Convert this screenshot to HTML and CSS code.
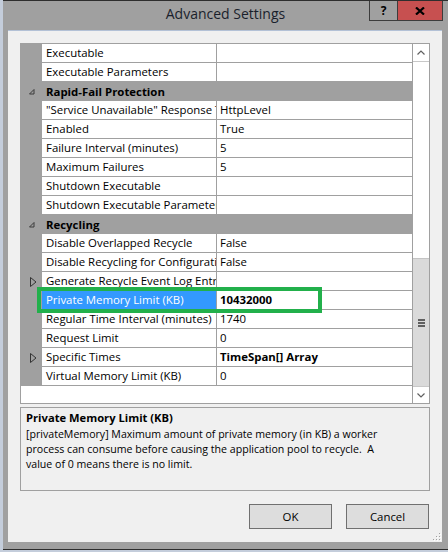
FILE: index.html
```html
<!DOCTYPE html>
<html>
<head>
<meta charset="utf-8">
<link rel="stylesheet" href="styles.css">
</head>
<body>
<div class="window">
  <div class="titlebar">
    <div class="title">Advanced Settings</div>
    <div class="caps">
      <div class="help">?</div>
      <div class="close">
        <svg width="10" height="8" viewBox="0 0 10 8"><path d="M1 0.5 L9 7.5 M9 0.5 L1 7.5" stroke="#000" stroke-width="2.2" fill="none"/></svg>
      </div>
    </div>
  </div>
  <div class="client">
    <div class="grid">
      <div class="rows">
        <div class="row"><div class="gut"></div><div class="name">Executable</div><div class="val"></div></div>
        <div class="row"><div class="gut"></div><div class="name">Executable Parameters</div><div class="val"></div></div>
        <div class="row cat"><div class="gut"><svg class="exp" width="6" height="6" viewBox="0 0 6 6"><path d="M5 0.5 L5 5 L0.5 5 Z" stroke="#3a3a3a" stroke-width="1" fill="none"/></svg></div><div class="name">Rapid-Fail Protection</div></div>
        <div class="row"><div class="gut"></div><div class="name">"Service Unavailable" Response Type</div><div class="val">HttpLevel</div></div>
        <div class="row"><div class="gut"></div><div class="name">Enabled</div><div class="val">True</div></div>
        <div class="row"><div class="gut"></div><div class="name">Failure Interval (minutes)</div><div class="val">5</div></div>
        <div class="row"><div class="gut"></div><div class="name">Maximum Failures</div><div class="val">5</div></div>
        <div class="row"><div class="gut"></div><div class="name">Shutdown Executable</div><div class="val"></div></div>
        <div class="row"><div class="gut"></div><div class="name">Shutdown Executable Parameters</div><div class="val"></div></div>
        <div class="row cat"><div class="gut"><svg class="exp" width="6" height="6" viewBox="0 0 6 6"><path d="M5 0.5 L5 5 L0.5 5 Z" stroke="#3a3a3a" stroke-width="1" fill="none"/></svg></div><div class="name">Recycling</div></div>
        <div class="row"><div class="gut"></div><div class="name">Disable Overlapped Recycle</div><div class="val">False</div></div>
        <div class="row"><div class="gut"></div><div class="name">Disable Recycling for Configuration Changes</div><div class="val">False</div></div>
        <div class="row"><div class="gut gc"><svg class="col" width="7" height="10" viewBox="0 0 7 10"><path d="M0.5 0.5 L6 5 L0.5 9.5 Z" stroke="#333" stroke-width="1" fill="none"/></svg></div><div class="name">Generate Recycle Event Log Entry</div><div class="val"></div></div>
        <div class="row selrow"><div class="gut"></div><div class="name sel">Private Memory Limit (KB)</div><div class="val b">10432000</div><div class="highlight"></div></div>
        <div class="row"><div class="gut"></div><div class="name">Regular Time Interval (minutes)</div><div class="val">1740</div></div>
        <div class="row"><div class="gut"></div><div class="name">Request Limit</div><div class="val">0</div></div>
        <div class="row"><div class="gut gc"><svg class="col" width="7" height="10" viewBox="0 0 7 10"><path d="M0.5 0.5 L6 5 L0.5 9.5 Z" stroke="#333" stroke-width="1" fill="none"/></svg></div><div class="name">Specific Times</div><div class="val b">TimeSpan[] Array</div></div>
        <div class="row"><div class="gut"></div><div class="name">Virtual Memory Limit (KB)</div><div class="val">0</div></div>
      </div>
      <div class="scroll">
        <div class="sbtn up"><svg width="8" height="5" viewBox="0 0 8 5"><path d="M0.5 4.5 L4 1 L7.5 4.5" stroke="#606060" stroke-width="1.2" fill="none"/></svg></div>
        <div class="track"></div>
        <div class="thumb"><div class="grip"><span></span><span></span><span></span></div></div>
        <div class="sbtn down"><svg width="8" height="5" viewBox="0 0 8 5"><path d="M0.5 0.5 L4 4 L7.5 0.5" stroke="#606060" stroke-width="1.2" fill="none"/></svg></div>
      </div>
    </div>
    <div class="desc">
      <div class="desc-title">Private Memory Limit (KB)</div>
      <div class="desc-text">[privateMemory] Maximum amount of private memory (in KB) a worker<br>process can consume before causing the application pool to recycle.&nbsp; A<br>value of 0 means there is no limit.</div>
    </div>
    <div class="buttons">
      <div class="btn">OK</div>
      <div class="btn">Cancel</div>
    </div>
    <svg class="sizegrip" width="9" height="8" viewBox="0 0 9 8">
      <rect x="7" y="0" width="1" height="1" fill="#a0a0a0"/>
      <rect x="4" y="3" width="1" height="1" fill="#a0a0a0"/>
      <rect x="7" y="3" width="1" height="1" fill="#a0a0a0"/>
      <rect x="1" y="6" width="1" height="1" fill="#a0a0a0"/>
      <rect x="4" y="6" width="1" height="1" fill="#a0a0a0"/>
      <rect x="7" y="6" width="1" height="1" fill="#a0a0a0"/>
      <rect x="8" y="1" width="1" height="1" fill="#fff"/>
      <rect x="5" y="4" width="1" height="1" fill="#fff"/>
      <rect x="8" y="4" width="1" height="1" fill="#fff"/>
      <rect x="2" y="7" width="1" height="1" fill="#fff"/>
      <rect x="5" y="7" width="1" height="1" fill="#fff"/>
      <rect x="8" y="7" width="1" height="1" fill="#fff"/>
    </svg>
  </div>
</div>
</body>
</html>
```

FILE: styles.css
```css
* { box-sizing: border-box; }
html, body { margin: 0; padding: 0; }
body {
  width: 448px;
  height: 552px;
  overflow: hidden;
  background: #c4cddb;
  font-family: "Open Sans", "Noto Sans", sans-serif;
  color: #000;
}
.window {
  margin-left: 3px;
  width: 445px;
  height: 550px;
  background: #a0a0a0;
  border-top: 1px solid #2e2e2e;
  border-bottom: 1px solid #2e2e2e;
  display: flex;
  flex-direction: column;
}
.titlebar {
  height: 29px;
  flex: none;
  display: grid;
  grid-template-columns: 1fr auto 1fr;
}
.title {
  grid-column: 2;
  padding-top: 4px;
  font-size: 14px;
  line-height: 18px;
  color: #1a1f2c;
  white-space: nowrap;
}
.caps {
  grid-column: 3;
  justify-self: end;
  display: flex;
  height: 20px;
  margin-right: 5px;
}
.help {
  width: 28px;
  height: 20px;
  border-left: 1px solid #3c3c3c;
  border-bottom: 1px solid #3c3c3c;
  display: flex;
  align-items: center;
  justify-content: center;
  font-weight: bold;
  font-size: 12px;
  color: #000;
  padding-bottom: 1px;
}
.close {
  width: 46px;
  height: 20px;
  background: #c75050;
  border: 1px solid #3c3c3c;
  border-top: none;
  display: flex;
  align-items: center;
  justify-content: center;
}
.client {
  position: relative;
  flex: none;
  margin: 0 6px 0 5px;
  height: 512px;
  background: #f0f0f0;
  border-top: 1px solid #b3c1d6;
  padding: 12px 12px 0 12px;
  display: flex;
  flex-direction: column;
}
.grid {
  flex: none;
  height: 361px;
  border: 1px solid #a0a0a0;
  background: #fff;
  display: flex;
}
.rows {
  width: 391px;
  font-size: 11.4px;
}
.row {
  display: flex;
  height: 19px;
}
.gut {
  width: 21px;
  flex: none;
  background: #a0a0a0;
  display: flex;
  align-items: center;
  padding-left: 8px;
}
.gut.gc { padding-left: 9px; }
.name {
  width: 175px;
  flex: none;
  padding-left: 4px;
  border-right: 1px solid #a0a0a0;
  border-bottom: 1px solid #a0a0a0;
  line-height: 18px;
  white-space: nowrap;
  overflow: hidden;
}
.val {
  width: 195px;
  flex: none;
  padding-left: 3px;
  border-bottom: 1px solid #a0a0a0;
  line-height: 18px;
  white-space: nowrap;
  overflow: hidden;
}
.b { font-weight: bold; }
.cat { background: #a0a0a0; }
.cat .name {
  width: auto;
  flex: 1;
  border: none;
  font-weight: bold;
  line-height: 19px;
}
.sel {
  background: #3399ff;
  color: #fff;
}
.selrow { position: relative; }
.highlight {
  position: absolute;
  left: 16px;
  top: -4px;
  width: 285px;
  height: 26px;
  border: 4px solid #22b04b;
}
.scroll {
  width: 17px;
  flex: none;
  border-left: 1px solid #a0a0a0;
  display: flex;
  flex-direction: column;
  background: #fff;
}
.sbtn {
  background: #fff;
  display: flex;
  align-items: center;
  justify-content: center;
  flex: none;
}
.up {
  height: 18px;
  border-bottom: 1px solid #c8c8c8;
}
.down {
  height: 17px;
  border-top: 1px solid #c8c8c8;
}
.track {
  height: 196px;
  flex: none;
  background: #fff;
}
.thumb {
  height: 128px;
  flex: none;
  background: #dadada;
  border-top: 1px solid #c4c4c4;
  display: flex;
  align-items: center;
  justify-content: center;
}
.grip {
  display: flex;
  flex-direction: column;
  gap: 1px;
}
.grip span {
  display: block;
  width: 7px;
  height: 2px;
  background: #606060;
}
.desc {
  flex: none;
  margin-top: 3px;
  height: 84px;
  border: 1px solid #a0a0a0;
  padding: 2px 5px 0 5px;
}
.desc-title {
  font-size: 11.2px;
  font-weight: bold;
  line-height: 15px;
  margin-bottom: 2px;
}
.desc-text {
  font-size: 10.6px;
  line-height: 15px;
  white-space: nowrap;
}
.buttons {
  flex: none;
  margin-top: 13px;
  display: flex;
  justify-content: flex-end;
  gap: 14px;
  padding-right: 1px;
}
.btn {
  width: 83px;
  height: 25px;
  background: #dddddd;
  border: 1px solid #707070;
  font-size: 11.4px;
  line-height: 23px;
  text-align: center;
}
.sizegrip {
  position: absolute;
  left: 424px;
  top: 502px;
}
```
